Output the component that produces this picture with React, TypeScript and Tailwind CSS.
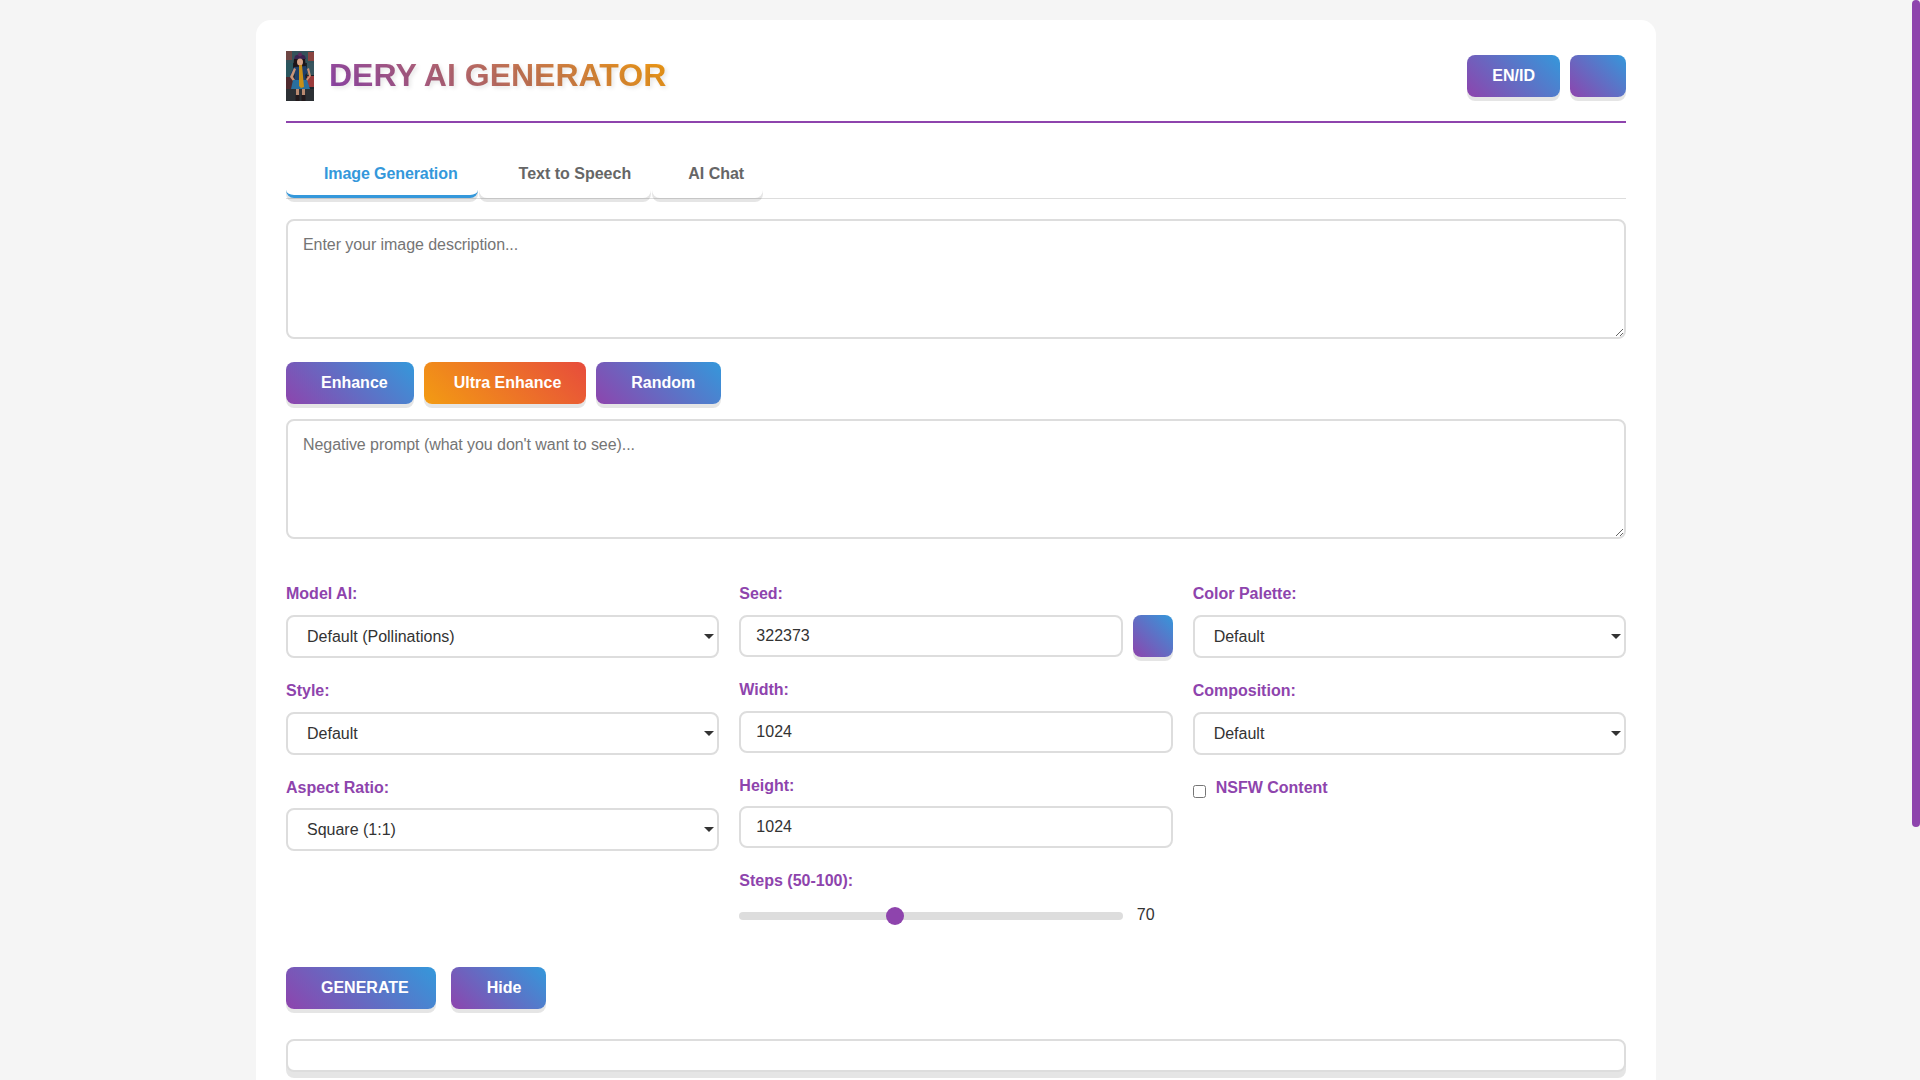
import React, { useState } from 'react';

const inputCls =
  'block w-full h-[42px] px-[15px] border-2 border-[#ddd] rounded-lg bg-white text-[#333] text-base outline-none';
const selectCls =
  'block w-full h-[43px] pl-[19px] pr-[15px] border-2 border-[#ddd] rounded-lg bg-white text-[#333] text-base outline-none appearance-none';
const textareaCls =
  'block w-full h-[120px] px-[15px] pt-3 border-2 border-[#ddd] rounded-lg bg-white text-[#333] text-base resize-y outline-none placeholder:text-[#757575] placeholder:tracking-[-0.06px]';
const labelCls = 'block font-bold text-base leading-[18px] text-[#8e44ad]';
const labelTop = 'h-[19px] pt-px mb-3';
const labelLow = 'h-[20px] pt-[2px] mb-[11px]';
const btnBase =
  'h-[42px] rounded-lg text-white font-bold text-base shadow-[0_4px_0_rgba(0,0,0,0.1)] flex-none';
const blueBtn = `${btnBase} bg-[linear-gradient(45deg,#8e44ad,#3498db)]`;
const orangeBtn = `${btnBase} bg-[linear-gradient(45deg,#f39c12,#e74c3c)]`;

function Logo() {
  return (
    <svg viewBox="0 0 28 50" className="w-7 h-[50px] flex-none block">
      <rect width="28" height="50" fill="#1b262c" />
      <rect x="0" y="0" width="28" height="12" fill="#34525a" />
      <rect x="0" y="0" width="6" height="9" fill="#6e4644" />
      <rect x="22" y="1" width="6" height="9" fill="#8a4440" />
      <rect x="0" y="12" width="7" height="14" fill="#2a565e" />
      <rect x="21" y="12" width="7" height="12" fill="#39555e" />
      <rect x="0" y="26" width="8" height="12" fill="#4e2a2e" />
      <rect x="21" y="25" width="7" height="11" fill="#9a3b3c" />
      <rect x="0" y="38" width="28" height="12" fill="#2c3034" />
      <path d="M9 5c2-2 8-2 10 0l1 3H8z" fill="#3a2450" />
      <circle cx="14" cy="3.5" r="2" fill="#5e2a5c" />
      <path d="M8 8h11l1 10H7z" fill="#1c1418" />
      <ellipse cx="14" cy="11" rx="3" ry="3.6" fill="#d8a488" />
      <path d="M8 16l12-1 2 6-3 3 1 6H8l1-7-4 3-1-3z" fill="#1e3f6a" />
      <path d="M4 26l4-9 2 1-3 8 2 3-2 1z" fill="#c89478" />
      <path d="M23 17l2 8-4 5-1-2 3-3-2-7z" fill="#c89478" />
      <path d="M7 29h14l3 9H5z" fill="#2a6f9e" />
      <path d="M13 14h3l2 22-3 1-2-2z" fill="#c98f16" />
      <rect x="10" y="38" width="3" height="7" fill="#b98a70" />
      <rect x="16" y="38" width="3" height="7" fill="#b98a70" />
      <rect x="9.5" y="44" width="4" height="6" fill="#231a1c" />
      <rect x="15.5" y="44" width="4" height="6" fill="#231a1c" />
    </svg>
  );
}

function Tab({ label, active, cls }: { label: string; active?: boolean; cls: string }) {
  return (
    <button
      className={`${cls} h-[46px] rounded-b-lg border-b-[3px] bg-white font-bold text-base shadow-[0_4px_0_rgba(0,0,0,0.1)] ${
        active ? 'border-[#3498db] text-[#3498db]' : 'border-transparent text-[#666]'
      }`}
    >
      {label}
    </button>
  );
}

function SelectField({ label, low, cls, options }: { label: string; low?: boolean; cls: string; options: string[] }) {
  return (
    <div className={cls}>
      <label className={`${labelCls} ${low ? labelLow : labelTop}`}>{label}</label>
      <div className="relative">
        <select className={selectCls}>
          {options.map((o) => (
            <option key={o}>{o}</option>
          ))}
        </select>
        <span className="absolute right-[5px] top-[19px] border-x-[5px] border-t-[5px] border-x-transparent border-t-[#333] pointer-events-none"></span>
      </div>
    </div>
  );
}

function NumberField({ label, low, cls, value }: { label: string; low?: boolean; cls: string; value: string }) {
  return (
    <div className={cls}>
      <label className={`${labelCls} ${low ? labelLow : labelTop}`}>{label}</label>
      <input className={inputCls} type="number" defaultValue={value} />
    </div>
  );
}

export default function App() {
  const [steps, setSteps] = useState(70);

  return (
    <div className="h-screen overflow-hidden pr-2 bg-[#f5f5f5] font-['Liberation_Sans',Arial,sans-serif] text-[#333]">
      {/* scrollbar thumb */}
      <div className="fixed top-0 right-0 w-2 h-[827px] rounded-[4px] bg-[#8e44ad]"></div>

      <div className="py-5">
        <div className="w-[1400px] min-h-[1371px] mx-auto bg-white rounded-[15px] px-[30px] pt-[30px]">
          {/* Header */}
          <header className="flex items-center justify-between pt-px pb-5 border-b-2 border-[#8e44ad]">
            <div className="flex items-center gap-[15px]">
              <Logo />
              <h1 className="text-[32px] leading-[37px] mb-[2px] font-bold bg-[linear-gradient(45deg,#8e44ad,#f39c12)] bg-clip-text text-transparent [text-shadow:2px_2px_4px_rgba(0,0,0,0.1)]">
                DERY AI GENERATOR
              </h1>
            </div>
            <div className="flex gap-2.5">
              <button className={`${blueBtn} px-[25px]`}>EN/ID</button>
              <button className={`${blueBtn} w-14`} aria-label="Theme"></button>
            </div>
          </header>

          {/* Tabs */}
          <div className="flex gap-px mt-[29px] h-[47px] border-b border-[#ddd]">
            <Tab label="Image Generation" active cls="pl-[38px] pr-[20px] tracking-[-0.1px]" />
            <Tab label="Text to Speech" cls="pl-10 pr-5" />
            <Tab label="AI Chat" cls="pl-9 pr-[19px]" />
          </div>

          <textarea className={`${textareaCls} mt-5`} placeholder="Enter your image description..." />

          <div className="flex gap-2.5 mt-[23px]">
            <button className={`${blueBtn} pl-[35px] pr-[26px]`}>Enhance</button>
            <button className={`${orangeBtn} pl-[30px] pr-[25px]`}>Ultra Enhance</button>
            <button className={`${blueBtn} pl-[35px] pr-[26px]`}>Random</button>
          </div>

          <textarea
            className={`${textareaCls} mt-[15px]`}
            placeholder="Negative prompt (what you don't want to see)..."
          />

          {/* Options */}
          <div className="grid grid-cols-3 gap-5 mt-[45px]">
            <div>
              <SelectField label="Model AI:" cls="mb-[23px]" options={['Default (Pollinations)']} />
              <SelectField label="Style:" cls="mb-[22px]" options={['Default']} />
              <SelectField label="Aspect Ratio:" low cls="mb-[22px]" options={['Square (1:1)']} />
            </div>

            <div>
              <div className="mb-[23px]">
                <label className={`${labelCls} ${labelTop}`}>Seed:</label>
                <div className="flex gap-2.5">
                  <input className={`${inputCls} flex-1 min-w-0`} type="number" defaultValue="322373" />
                  <button className={`${blueBtn} w-10`} aria-label="Random seed"></button>
                </div>
              </div>
              <NumberField label="Width:" cls="mb-[22px]" value="1024" />
              <NumberField label="Height:" low cls="mb-[22.5px]" value="1024" />
              <label className={`${labelCls} ${labelTop}`}>Steps (50-100):</label>
              <div className="flex items-center h-7 gap-[11px]">
                <input
                  type="range"
                  min={50}
                  max={100}
                  value={steps}
                  onChange={(e) => setSteps(Number(e.target.value))}
                  className="w-[384px] h-2 rounded-[5px] bg-[#ddd] appearance-none outline-none [&::-webkit-slider-thumb]:appearance-none [&::-webkit-slider-thumb]:w-[18px] [&::-webkit-slider-thumb]:h-[18px] [&::-webkit-slider-thumb]:rounded-full [&::-webkit-slider-thumb]:bg-[#8e44ad]"
                />
                <span className="text-base -mt-[2px] ml-[2.5px]">{steps}</span>
              </div>
            </div>

            <div>
              <SelectField label="Color Palette:" cls="mb-[23px]" options={['Default']} />
              <SelectField label="Composition:" cls="mb-[22px]" options={['Default']} />
              <div className="flex items-start gap-[10px]">
                <input type="checkbox" className="w-[13px] h-[13px] mt-2 flex-none" />
                <label className={`${labelCls} pt-[2px]`}>NSFW Content</label>
              </div>
            </div>
          </div>

          {/* Actions */}
          <div className="flex gap-[15px] mt-[37px]">
            <button className={`${blueBtn} pl-[35px] pr-[27px]`}>GENERATE</button>
            <button className={`${blueBtn} pl-9 pr-[25px]`}>Hide</button>
          </div>

          <div className="h-[33px] mt-[30px] border-2 border-[#ddd] rounded-lg bg-white shadow-[0_6px_0_rgba(0,0,0,0.1)]"></div>
        </div>
      </div>
    </div>
  );
}
